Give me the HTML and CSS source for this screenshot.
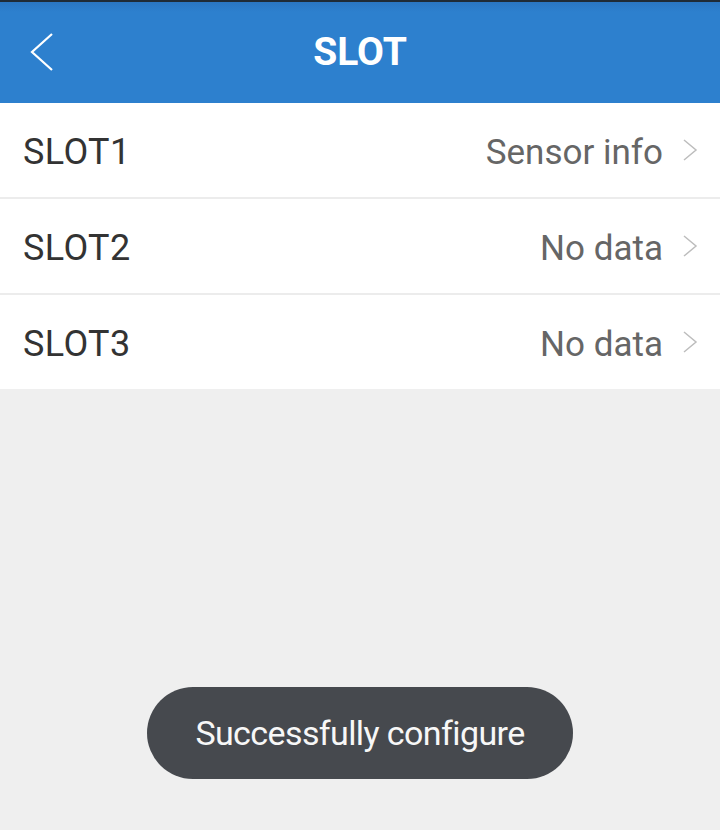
FILE: index.html
```html
<!DOCTYPE html>
<html>
<head>
    <title>SLOT</title>
    <link rel="stylesheet" href="styles.css">
</head>
<body>
    <div class="header">
        <a class="back" href="#">
            <svg width="24" height="40" viewBox="0 0 24 40">
                <polyline points="22,2 2,20 22,38" fill="none" stroke="#fff" stroke-width="2.2"/>
            </svg>
        </a>
        <h1>SLOT</h1>
        <span class="spacer"></span>
    </div>

    <ul class="slot-list">
        <li>
            <span class="name">SLOT1</span>
            <span class="value">Sensor info</span>
            <svg class="chevron" width="16" height="24" viewBox="0 0 16 24">
                <polyline points="2,2 14,12 2,22" fill="none" stroke="#bdbdbd" stroke-width="1.5"/>
            </svg>
        </li>
        <li>
            <span class="name">SLOT2</span>
            <span class="value">No data</span>
            <svg class="chevron" width="16" height="24" viewBox="0 0 16 24">
                <polyline points="2,2 14,12 2,22" fill="none" stroke="#bdbdbd" stroke-width="1.5"/>
            </svg>
        </li>
        <li>
            <span class="name">SLOT3</span>
            <span class="value">No data</span>
            <svg class="chevron" width="16" height="24" viewBox="0 0 16 24">
                <polyline points="2,2 14,12 2,22" fill="none" stroke="#bdbdbd" stroke-width="1.5"/>
            </svg>
        </li>
    </ul>

    <!-- toast -->
    <div class="toast">Successfully configure</div>
</body>
</html>
```

FILE: styles.css
```css
body {
    margin: 0;
    background: #efefef;
    font-family: Roboto, "Noto Sans", sans-serif;
    height: 830px;
    position: relative;
    overflow: hidden;
}

.header {
    height: 101px;
    border-top: 2px solid #1f2b36;
    background: linear-gradient(#2a76c2 0, #2d80ce 10px, #2d80ce 100%);
    display: flex;
    align-items: center;
}

.back {
    width: 60px;
    display: flex;
    justify-content: flex-end;
    padding-right: 6px;
    box-sizing: border-box;
    margin-top: -2px;
}

.spacer {
    width: 60px;
}

.header h1 {
    flex: 1;
    margin: 0;
    text-align: center;
    color: #fff;
    font-size: 39px;
    font-weight: bold;
    margin-top: -1px;
}

.slot-list {
    list-style: none;
    margin: 0;
    padding: 0;
    background: #fff;
}

.slot-list li {
    height: 94px;
    display: flex;
    align-items: center;
    padding: 0 22px 0 23px;
    border-bottom: 2px solid #ececec;
}

.slot-list li:last-child {
    border-bottom: none;
}

.name {
    flex: 1;
    font-size: 36px;
    letter-spacing: 0.4px;
    color: #333;
    padding-top: 4px;
}

.value {
    font-size: 35px;
    color: #666;
    padding-top: 4px;
}

.chevron {
    margin-left: 19px;
}

.toast {
    position: absolute;
    left: 147px;
    top: 687px;
    width: 426px;
    height: 92px;
    border-radius: 46px;
    background: #46494e;
    color: #f7f7f7;
    font-size: 34px;
    letter-spacing: -0.6px;
    display: flex;
    align-items: center;
    justify-content: center;
}
```
